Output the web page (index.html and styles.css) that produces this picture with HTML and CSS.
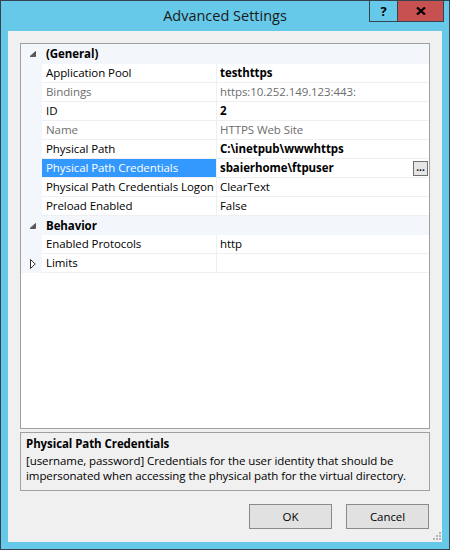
FILE: index.html
```html
<!DOCTYPE html>
<html>
<head>
<meta charset="utf-8">
<link rel="stylesheet" href="styles.css">
</head>
<body>
<div class="window">
  <div class="titlebar">
    <div class="spacer"></div>
    <div class="title">Advanced Settings</div>
    <div class="controls">
      <div class="btn-help">?</div>
      <div class="btn-close">
        <svg width="10" height="8" viewBox="0 0 10 8"><path d="M1 0.5 L9 7.5 M9 0.5 L1 7.5" stroke="#000" stroke-width="2.2" fill="none"/></svg>
      </div>
    </div>
  </div>
  <div class="client">
    <div class="grid">
      <div class="cat first">
        <span class="gutter"><svg class="exp" width="7" height="6" viewBox="0 0 7 6"><polygon points="6.5,0.5 6.5,5.5 1,5.5" fill="#595959" stroke="#595959" stroke-width="1" stroke-linejoin="round"/></svg></span>
        <span class="cat-label">(General)</span>
      </div>
      <div class="row"><span class="gutter"></span><span class="name">Application Pool</span><span class="value bold">testhttps</span></div>
      <div class="row dim"><span class="gutter"></span><span class="name">Bindings</span><span class="value">https:10.252.149.123:443:</span></div>
      <div class="row"><span class="gutter"></span><span class="name">ID</span><span class="value bold">2</span></div>
      <div class="row dim"><span class="gutter"></span><span class="name">Name</span><span class="value">HTTPS Web Site</span></div>
      <div class="row"><span class="gutter"></span><span class="name">Physical Path</span><span class="value bold">C:\inetpub\wwwhttps</span></div>
      <div class="row sel"><span class="gutter"></span><span class="name">Physical Path Credentials</span><span class="value bold"><span>sbaierhome\ftpuser</span><span class="ellipsis">...</span></span></div>
      <div class="row"><span class="gutter"></span><span class="name">Physical Path Credentials Logon</span><span class="value">ClearText</span></div>
      <div class="row"><span class="gutter"></span><span class="name">Preload Enabled</span><span class="value">False</span></div>
      <div class="cat">
        <span class="gutter"><svg class="exp" width="7" height="6" viewBox="0 0 7 6"><polygon points="6.5,0.5 6.5,5.5 1,5.5" fill="#595959" stroke="#595959" stroke-width="1" stroke-linejoin="round"/></svg></span>
        <span class="cat-label">Behavior</span>
      </div>
      <div class="row"><span class="gutter"></span><span class="name">Enabled Protocols</span><span class="value">http</span></div>
      <div class="row"><span class="gutter col"><svg width="6" height="10" viewBox="0 0 6 10"><polygon points="0.5,0.5 5.2,5 0.5,9.5" fill="#fff" stroke="#333" stroke-width="1"/></svg></span><span class="name">Limits</span><span class="value"></span></div>
    </div>
    <div class="desc">
      <div class="desc-title">Physical Path Credentials</div>
      <div class="desc-text">[username, password] Credentials for the user identity that should be<br>impersonated when accessing the physical path for the virtual directory.</div>
    </div>
    <div class="buttons">
      <div class="btn">OK</div>
      <div class="btn">Cancel</div>
    </div>
    <svg class="grip" width="8" height="9" viewBox="0 0 8 9">
      <rect x="6" y="0" width="2" height="2" fill="#b5b5b5"/>
      <rect x="3" y="3" width="2" height="2" fill="#b5b5b5"/>
      <rect x="6" y="3" width="2" height="2" fill="#b5b5b5"/>
      <rect x="0" y="6" width="2" height="2" fill="#b5b5b5"/>
      <rect x="3" y="6" width="2" height="2" fill="#b5b5b5"/>
      <rect x="6" y="6" width="2" height="2" fill="#b5b5b5"/>
    </svg>
  </div>
</div>
</body>
</html>
```
FILE: styles.css
```css
* { box-sizing: border-box; margin: 0; padding: 0; }
body {
  margin: 0;
  width: 450px;
  height: 550px;
  font-family: "Open Sans", "Noto Sans", sans-serif;
  font-size: 11.5px;
  letter-spacing: -0.08px;
  color: #000;
}
.window {
  width: 450px;
  height: 550px;
  border: 1px solid #34434e;
  background: #66c9ea;
  display: flex;
  flex-direction: column;
}
.titlebar {
  height: 30px;
  flex: none;
  display: grid;
  grid-template-columns: 1fr auto 1fr;
}
.title {
  font-size: 14.5px;
  letter-spacing: 0;
  line-height: 30px;
  color: #1a1a1a;
  white-space: nowrap;
}
.controls {
  justify-self: end;
  display: flex;
  height: 21px;
  margin-right: 5px;
}
.btn-help {
  width: 29px;
  height: 21px;
  border: 1px solid #34434e;
  border-top: none;
  font-weight: bold;
  font-size: 13px;
  line-height: 20px;
  text-align: center;
}
.btn-close {
  width: 46px;
  height: 21px;
  border: 1px solid #34434e;
  border-top: none;
  border-left: none;
  background: #c75050;
  display: flex;
  align-items: center;
  justify-content: center;
}
.client {
  flex: 1;
  margin: 0 7px 7px;
  background: #f0f0f0;
  padding: 12px 12px 0;
  display: flex;
  flex-direction: column;
  position: relative;
}
.grid {
  height: 386px;
  flex: none;
  border: 1px solid #a0a0a0;
  background: #fff;
}
.row, .cat {
  display: flex;
  height: 19px;
}
.cat {
  background: #f3f6fb;
}
.cat.first { height: 20px; }
.gutter {
  width: 21px;
  flex: none;
  background: #f3f6fb;
  display: flex;
  align-items: center;
  padding-left: 8px;
}
.gutter.col { padding-left: 9px; }
.cat-label {
  font-weight: bold;
  padding-left: 4px;
  line-height: 19px;
}
.name {
  width: 175px;
  flex: none;
  border-right: 1px solid #edeff3;
  border-bottom: 1px solid #edeff3;
  padding-left: 4px;
  line-height: 18px;
  white-space: nowrap;
  overflow: hidden;
  background-clip: padding-box;
}
.value {
  flex: 1;
  border-bottom: 1px solid #edeff3;
  padding-left: 3px;
  line-height: 18px;
  white-space: nowrap;
  display: flex;
  justify-content: space-between;
  align-items: center;
}
.bold { font-weight: bold; }
.dim .name, .dim .value { color: #6d6d6d; }
.sel .name {
  background-color: #3399ff;
  color: #fff;
}
.ellipsis {
  width: 15px;
  height: 15px;
  margin-right: 1px;
  border: 1px solid #707070;
  background: #e6e6e6;
  font-weight: bold;
  font-size: 10px;
  line-height: 10px;
  text-align: center;
  letter-spacing: 0;
}
.desc {
  height: 59px;
  flex: none;
  margin-top: 3px;
  border: 1px solid #a0a0a0;
  padding: 1px 5px 0;
}
.desc-title {
  font-weight: bold;
  line-height: 19px;
}
.desc-text {
  line-height: 15px;
  white-space: nowrap;
}
.buttons {
  display: flex;
  justify-content: flex-end;
  gap: 14px;
  margin-top: 13px;
  padding-right: 1px;
}
.btn {
  width: 83px;
  height: 25px;
  border: 1px solid #8a8a8a;
  background: #e1e1e1;
  text-align: center;
  line-height: 23px;
}
.grip {
  position: absolute;
  right: 1px;
  bottom: 1px;
}
```
